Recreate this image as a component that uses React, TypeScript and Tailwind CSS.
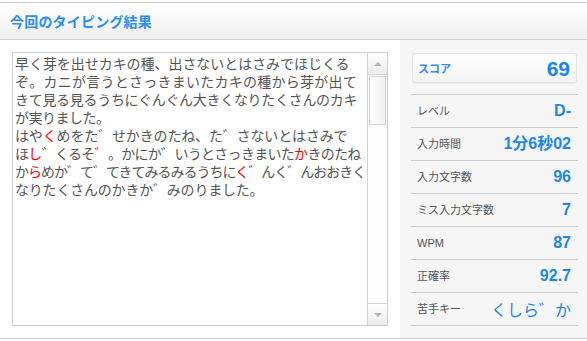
import React from "react";

const R = ({ children }: { children: React.ReactNode }) => (
  <span className="text-[#ff0000]">{children}</span>
);
const D = ({ red }: { red?: boolean }) => (
  <span className={red ? "text-[#ff0000]" : ""}>゛</span>
);

const rows: [string, React.ReactNode][] = [
  ["レベル", "D-"],
  ["入力時間", "1分6秒02"],
  ["入力文字数", "96"],
  ["ミス入力文字数", "7"],
  ["WPM", "87"],
  ["正確率", "92.7"],
];

export default function App() {
  return (
    <div
      className="w-[587px] h-[341px] bg-white pt-[2px] overflow-hidden"
      style={{ fontFamily: '"Liberation Sans", "Noto Sans CJK JP", sans-serif' }}
    >
      <div className="h-[38px] border-y border-[#d2d2d2] bg-gradient-to-b from-white to-[#efefef] flex items-center pl-[10px]">
        <span
          className="text-[14px] font-bold text-[#2b8ef0] leading-none tracking-[0.2px]"
          style={{ fontFamily: '"Noto Sans CJK JP", sans-serif' }}
        >
          今回のタイピング結果
        </span>
      </div>
      <div className="flex h-[299px] border-b border-[#d2d2d2]">
        <div className="w-[400px] p-[12px] bg-white">
          <div className="h-[274px] border border-[#cfcfcf] flex">
            <div
              className="flex-1 pl-[2px] pt-[1px] text-[14px] leading-[18px] text-[#555555] whitespace-nowrap overflow-hidden"
              style={{ fontFamily: '"Noto Sans CJK JP", sans-serif' }}
            >
              <div className="tracking-[-0.05px]">早く芽を出せカキの種、出さないとはさみでほじくる</div>
              <div className="tracking-[0.25px]">ぞ。カニが言うとさっきまいたカキの種から芽が出て</div>
              <div className="tracking-[-0.3px]">きて見る見るうちにぐんぐん大きくなりたくさんのカキ</div>
              <div className="tracking-[-0.5px]">が実りました。</div>
              <div className="tracking-[-0.15px]">
                はや<R>く</R>めをた<D />せかきのたね、た<D />さないとはさみで
              </div>
              <div className="tracking-[-0.7px]">
                ほ<R>し</R>
                <D />くるそ<D red />。かにか<D />いうとさっきまいた<R>か</R>きのたね
              </div>
              <div className="tracking-[-1px]">
                か<R>ら</R>めか<D />て<D />てきてみるみるうちに<R>く</R>
                <D />んく<D />んおおきく
              </div>
              <div className="tracking-[-0.2px]">
                なりたくさんのかきか<D />みのりました。
              </div>
            </div>
            <div className="w-[20px] border-l border-[#d2d2d2] flex flex-col bg-[#fdfdfd]">
              <div className="h-[22px] border-b border-[#d6d6d6] bg-gradient-to-b from-white to-[#ececec] flex items-center justify-center">
                <div className="w-0 h-0 border-x-[4px] border-x-transparent border-b-[4px] border-b-[#b5b5b5]" />
              </div>
              <div className="mx-[1px] mt-[1px] h-[49px] border border-[#d4d4d4] bg-gradient-to-r from-white to-[#f1f1f1]" />
              <div className="flex-1" />
              <div className="h-[22px] border-t border-[#d6d6d6] bg-gradient-to-b from-white to-[#ececec] flex items-center justify-center">
                <div className="w-0 h-0 border-x-[4px] border-x-transparent border-t-[4px] border-t-[#b5b5b5]" />
              </div>
            </div>
          </div>
        </div>
        <div className="flex-1 bg-[#f6f6f6] pt-[13px] pl-[12px] pr-[10px]">
          <div className="h-[30px] rounded-[3px] border border-[#e3e3e3] bg-gradient-to-b from-white to-[#f4f4f4] shadow-[0_1px_1px_rgba(0,0,0,0.04)] flex items-center justify-between pl-[5px] pr-[6px]">
            <span
              className="text-[11px] font-bold text-[#2b8ef0]"
              style={{ fontFamily: '"Noto Sans CJK JP", sans-serif' }}
            >
              スコア
            </span>
            <span className="text-[21px] font-bold text-[#1a87f0] leading-none">69</span>
          </div>
          <div className="mt-[11px] border-t border-[#cfcfcf] -mx-[1px]">
            {rows.map(([label, value]) => (
              <div
                key={label}
                className="h-[33px] border-b border-[#cfcfcf] flex items-center justify-between pl-[6px] pr-[7px]"
              >
                <span className="text-[11px] text-[#555555]">{label}</span>
                <span className="text-[16px] font-bold text-[#1a87f0] leading-none">{value}</span>
              </div>
            ))}
            <div className="h-[33px] border-b border-[#cfcfcf] flex items-center justify-between pl-[6px] pr-[7px]">
              <span className="text-[11px] text-[#555555]">苦手キー</span>
              <span
                className="text-[16px] text-[#1a87f0] leading-none"
                style={{ fontFamily: '"Noto Sans CJK JP", sans-serif' }}
              >
                くしら゛か
              </span>
            </div>
          </div>
        </div>
      </div>
    </div>
  );
}
